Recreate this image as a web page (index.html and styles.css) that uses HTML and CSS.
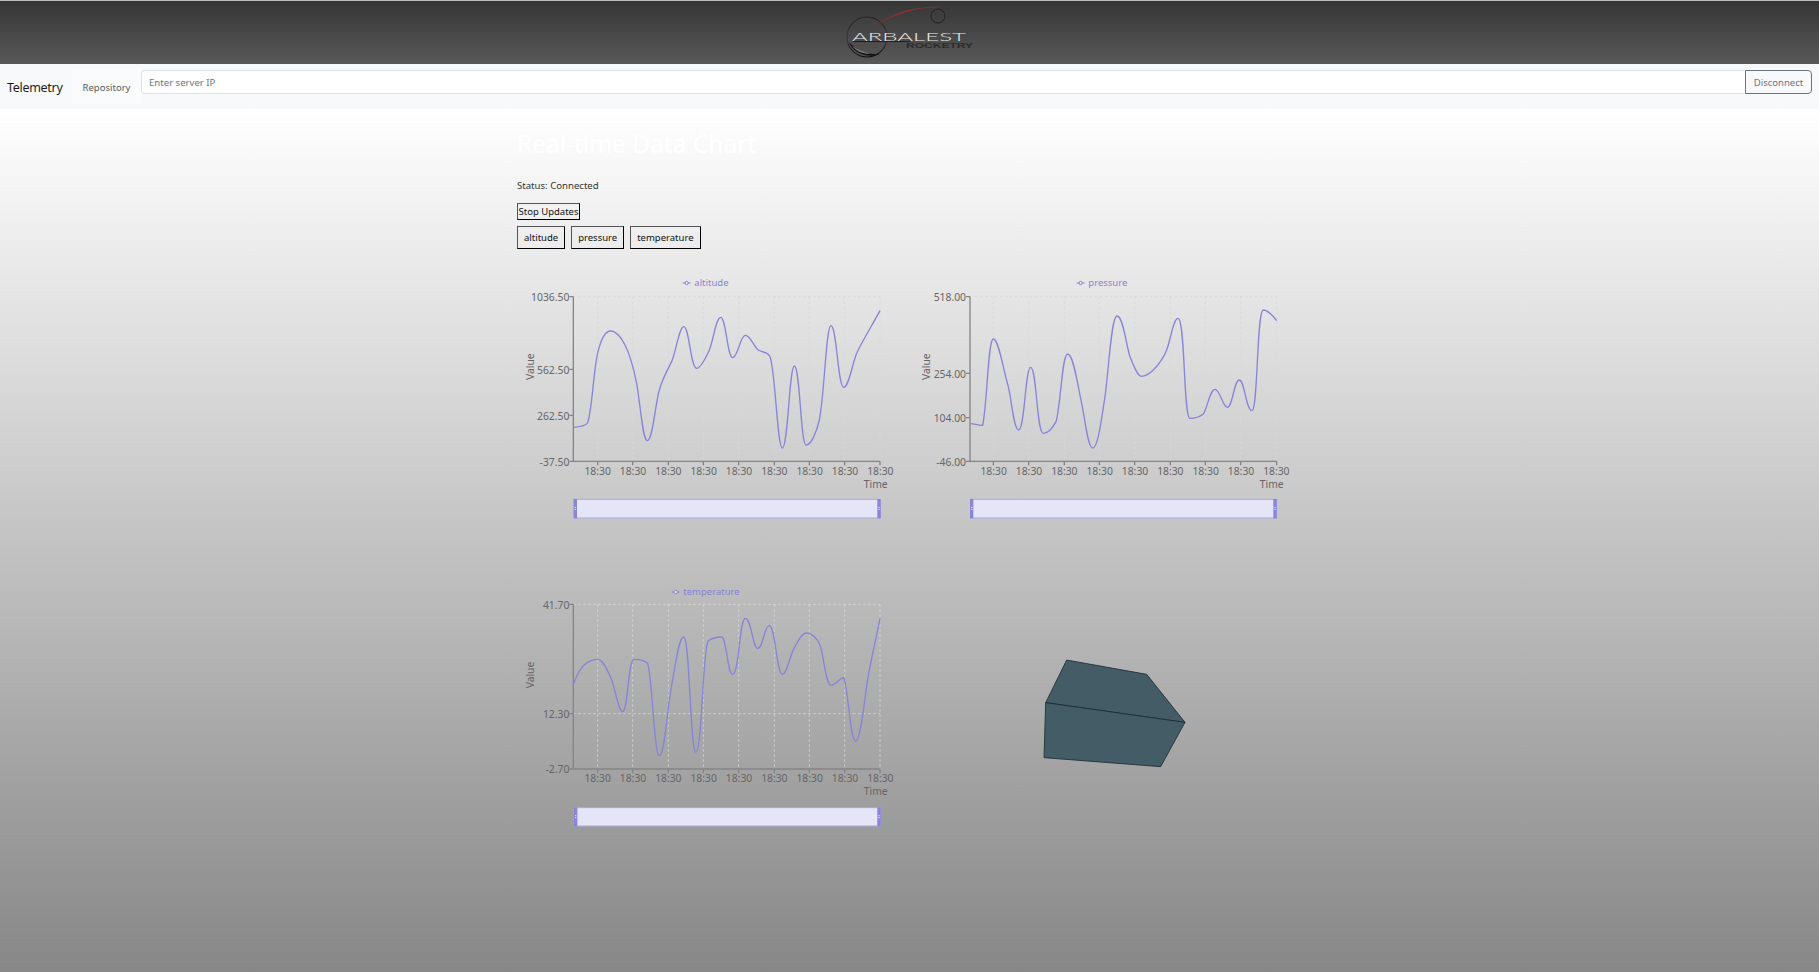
FILE: index.html
```html
<!DOCTYPE html>
<html lang="en">
<head>
<meta charset="utf-8">
<title>Telemetry</title>
<link rel="stylesheet" href="styles.css">
</head>
<body>
<header class="banner">
  <svg class="logo" width="140" height="64" viewBox="0 0 140 64">
    <defs>
      <linearGradient id="ringfade" x1="0" y1="0" x2="0" y2="1">
        <stop offset="0" stop-color="#222"/>
        <stop offset="0.55" stop-color="#3a3a3a"/>
        <stop offset="1" stop-color="#111"/>
      </linearGradient>
      <linearGradient id="redarc" x1="0" y1="1" x2="1" y2="0">
        <stop offset="0" stop-color="#6a3030"/>
        <stop offset="0.6" stop-color="#b52a2a"/>
        <stop offset="1" stop-color="#5a3a3a"/>
      </linearGradient>
    </defs>
    <circle cx="27" cy="37" r="20" fill="none" stroke="url(#ringfade)" stroke-width="1.2"/>
    <path d="M9 42 C13 53 27 59 41 54 C30 55 17 52 9 42Z" fill="#111"/>
    <path d="M12 46 C17 52 24 54 30 54 C23 52 17 49 12 46Z" fill="#ccc" opacity="0.55"/>
    <circle cx="98" cy="16" r="7" fill="none" stroke="#222" stroke-width="1"/>
    <path d="M37 25 C55 12 75 7 100 7" fill="none" stroke="url(#redarc)" stroke-width="1.2"/>
    <path d="M13 41.5 H70" stroke="#111" stroke-width="0.8"/>
    <text class="logo-main" x="12" y="41" textLength="114" lengthAdjust="spacingAndGlyphs">ARBALEST</text>
    <text class="logo-sub" x="66" y="48" textLength="67" lengthAdjust="spacingAndGlyphs">ROCKETRY</text>
  </svg>
</header>

<nav class="navbar">
  <span class="brand">Telemetry</span>
  <a class="tab">Repository</a>
  <div class="ip-group">
    <input class="ip-input" type="text" placeholder="Enter server IP">
    <button class="disconnect">Disconnect</button>
  </div>
</nav>

<main class="page">
  <div class="content">
    <h1 class="title">Real-time Data Chart</h1>
    <p class="status">Status: Connected</p>
    <button class="btn btn-stop">Stop Updates</button>
    <div class="series-buttons">
      <button class="btn btn-series">altitude</button>
      <button class="btn btn-series">pressure</button>
      <button class="btn btn-series">temperature</button>
    </div>

    <div class="charts">
      <svg class="chart" width="393" height="260" viewBox="21 0 1179 780">
        <g class="grid">
          <path d="M190 80H1110M190 298H1110M190 436H1110"/>
          <path d="M263 80V574M368 80V574M475 80V574M580 80V574M686 80V574M793 80V574M898 80V574M1004 80V574M1110 80V574"/>
        </g>
        <path class="axis" d="M190 80V574H1110M178 80H190M178 298H190M178 436H190M178 574H190M263 574V586M368 574V586M475 574V586M580 574V586M686 574V586M793 574V586M898 574V586M1004 574V586M1110 574V586"/>
        <g class="tick tick-y">
          <text x="178" y="93">1036.50</text>
          <text x="178" y="311">562.50</text>
          <text x="178" y="449">262.50</text>
          <text x="178" y="587">-37.50</text>
        </g>
        <g class="tick tick-x">
          <text x="263" y="614">18:30</text><text x="369" y="614">18:30</text><text x="475" y="614">18:30</text>
          <text x="581" y="614">18:30</text><text x="687" y="614">18:30</text><text x="793" y="614">18:30</text>
          <text x="899" y="614">18:30</text><text x="1005" y="614">18:30</text><text x="1111" y="614">18:30</text>
        </g>
        <text class="axis-label" transform="translate(72 290) rotate(-90)">Value</text>
        <text class="axis-label" x="1097" y="653">Time</text>
        <path class="line" d="M190 472C206 470 224 469 232 460C246 430 250 300 264 245C274 205 288 183 302 183C318 183 336 205 345 225C360 255 372 300 380 340C392 410 398 512 412 512C428 512 436 400 448 360C458 325 472 300 485 275C498 245 508 170 521 170C538 170 542 295 560 295C572 295 588 262 598 240C610 212 618 142 632 142C648 142 652 263 668 263C684 263 690 196 706 196C722 196 732 232 745 240C758 248 774 246 780 260C796 300 802 534 817 534C834 534 838 288 853 288C870 288 872 525 888 525C904 525 920 485 928 450C944 370 948 167 963 167C980 167 984 352 1001 352C1016 352 1026 285 1040 250C1058 210 1090 160 1110 122"/>
        <path class="legend-mark" d="M518 39H542"/><circle class="legend-dot" cx="530" cy="39" r="5"/>
        <text class="legend-text" x="553" y="49">altitude</text>
        <rect class="brush" x="192" y="688" width="918" height="56"/>
        <rect class="traveller" x="191" y="687" width="10" height="58"/><path class="grip" d="M194 712H198M194 718H198"/>
        <rect class="traveller" x="1102" y="687" width="10" height="58"/><path class="grip" d="M1105 712H1109M1105 718H1109"/>
      </svg>

      <svg class="chart" width="393" height="260" viewBox="0 0 1179 780">
        <g class="grid">
          <path d="M180 80H1100M180 310H1100M180 443H1100"/>
          <path d="M250 80V574M356 80V574M463 80V574M568 80V574M674 80V574M781 80V574M886 80V574M992 80V574M1100 80V574"/>
        </g>
        <path class="axis" d="M180 80V574H1100M168 80H180M168 310H180M168 443H180M168 574H180M250 574V586M356 574V586M463 574V586M568 574V586M674 574V586M781 574V586M886 574V586M992 574V586M1100 574V586"/>
        <g class="tick tick-y">
          <text x="168" y="93">518.00</text>
          <text x="168" y="323">254.00</text>
          <text x="168" y="456">104.00</text>
          <text x="168" y="587">-46.00</text>
        </g>
        <g class="tick tick-x">
          <text x="251" y="614">18:30</text><text x="357" y="614">18:30</text><text x="463" y="614">18:30</text>
          <text x="569" y="614">18:30</text><text x="675" y="614">18:30</text><text x="781" y="614">18:30</text>
          <text x="887" y="614">18:30</text><text x="993" y="614">18:30</text><text x="1099" y="614">18:30</text>
        </g>
        <text class="axis-label" transform="translate(60 290) rotate(-90)">Value</text>
        <text class="axis-label" x="1085" y="653">Time</text>
        <path class="line" d="M180 460C195 462 208 467 218 466C232 400 234 207 250 207C266 207 280 300 295 350C306 400 312 480 326 480C344 480 346 292 362 292C380 292 380 490 400 490C416 490 430 470 438 455C452 410 456 252 473 252C490 252 502 340 515 400C526 455 534 534 548 534C564 534 574 450 585 380C596 300 604 138 621 138C640 138 648 225 660 260C670 285 682 319 694 319C708 319 720 310 730 300C745 285 760 265 770 240C782 210 790 145 804 145C826 145 820 445 840 445C855 445 870 440 880 432C892 415 900 358 915 358C930 358 938 412 952 412C968 412 972 330 988 330C1004 330 1008 422 1026 422C1044 422 1040 120 1060 120C1072 120 1090 138 1100 152"/>
        <path class="legend-mark" d="M500 39H524"/><circle class="legend-dot" cx="512" cy="39" r="5"/>
        <text class="legend-text" x="535" y="49">pressure</text>
        <rect class="brush" x="182" y="688" width="918" height="56"/>
        <rect class="traveller" x="180" y="687" width="10" height="58"/><path class="grip" d="M183 712H187M183 718H187"/>
        <rect class="traveller" x="1090" y="687" width="10" height="58"/><path class="grip" d="M1093 712H1097M1093 718H1097"/>
      </svg>

      <svg class="chart" width="393" height="260" viewBox="21 0 1179 780">
        <g class="grid">
          <path d="M190 73H1110M190 401H1110"/>
          <path d="M263 73V567M368 73V567M475 73V567M580 73V567M686 73V567M793 73V567M898 73V567M1004 73V567M1110 73V567"/>
        </g>
        <path class="axis" d="M190 73V567H1110M178 73H190M178 401H190M178 567H190M263 567V579M368 567V579M475 567V579M580 567V579M686 567V579M793 567V579M898 567V579M1004 567V579M1110 567V579"/>
        <g class="tick tick-y">
          <text x="178" y="86">41.70</text>
          <text x="178" y="414">12.30</text>
          <text x="178" y="580">-2.70</text>
        </g>
        <g class="tick tick-x">
          <text x="263" y="607">18:30</text><text x="369" y="607">18:30</text><text x="475" y="607">18:30</text>
          <text x="581" y="607">18:30</text><text x="687" y="607">18:30</text><text x="793" y="607">18:30</text>
          <text x="899" y="607">18:30</text><text x="1005" y="607">18:30</text><text x="1111" y="607">18:30</text>
        </g>
        <text class="axis-label" transform="translate(72 285) rotate(-90)">Value</text>
        <text class="axis-label" x="1097" y="646">Time</text>
        <path class="line" d="M190 315C198 290 212 262 228 250C240 242 252 238 263 238C280 238 294 275 305 300C316 330 326 395 338 395C354 395 354 238 372 238C386 238 404 242 413 250C428 300 432 527 448 527C464 527 470 400 485 315C496 260 506 171 521 171C540 171 540 517 558 517C576 517 578 200 595 182C606 174 622 171 634 171C650 171 652 283 668 283C688 283 688 115 706 115C724 115 728 205 743 205C760 205 762 137 778 137C796 137 800 283 817 283C830 283 840 228 852 205C864 182 876 159 890 159C905 159 922 175 930 195C942 230 948 316 963 316C978 316 990 293 1001 293C1016 330 1020 483 1037 483C1052 483 1062 370 1072 305C1082 240 1100 170 1110 115"/>
        <path class="legend-mark" d="M485 36H509"/><circle class="legend-dot" cx="497" cy="36" r="5"/>
        <text class="legend-text" x="520" y="46">temperature</text>
        <rect class="brush" x="193" y="683" width="918" height="55"/>
        <rect class="traveller" x="192" y="682" width="10" height="57"/><path class="grip" d="M195 707H199M195 713H199"/>
        <rect class="traveller" x="1102" y="682" width="10" height="57"/><path class="grip" d="M1105 707H1109M1105 713H1109"/>
      </svg>

      <svg class="cube" width="393" height="260" viewBox="-330 -180 1179 780">
        <polygon class="cube-face" points="140,60 380,103 495,247 77,188"/>
        <polygon class="cube-face" points="77,188 495,247 422,380 72,353"/>
      </svg>
    </div>
  </div>
</main>
</body>
</html>
```
FILE: styles.css
```css
* { box-sizing: border-box; }
html, body { margin: 0; height: 100%; }
body {
  display: flex;
  flex-direction: column;
  font-family: "Noto Sans", sans-serif;
  background: #fff;
}

.banner {
  height: 64px;
  flex: none;
  display: flex;
  justify-content: center;
  background: linear-gradient(#363636, #585858);
  border-top: 1px solid #bbb;
}
.logo { display: block; margin-top: -1px; margin-left: 1px; }
.logo-main { font: 300 12px Lato, sans-serif; fill: #e8e8e8; }
.logo-sub { font: 700 7px "Liberation Sans", sans-serif; fill: #2c2c2c; }

.navbar {
  height: 45px;
  flex: none;
  display: flex;
  align-items: flex-start;
  padding-right: 7px;
  background: #f8f9fa;
}
.brand {
  width: 72px;
  padding-left: 7px;
  font-size: 12.5px;
  line-height: 20px;
  margin-top: 14px;
  letter-spacing: -0.3px;
  color: #1c1c1c;
}
.tab {
  width: 69px;
  height: 35px;
  margin-top: 5px;
  display: flex;
  align-items: center;
  justify-content: center;
  font-size: 9.5px;
  color: #55595e;
  background: #fbfbfc;
  padding-top: 2px;
}
.ip-group {
  flex: 1;
  display: flex;
  height: 24px;
  margin-top: 6px;
}
.ip-input {
  flex: 1;
  min-width: 0;
  height: 100%;
  padding: 0 0 0 7px;
  border: 1px solid #dee2e6;
  border-right: 0;
  border-radius: 4px 0 0 4px;
  background: #fff;
  font: 9.6px "Noto Sans", sans-serif;
  outline: none;
}
.ip-input::placeholder { color: #6c757d; opacity: 1; }
.disconnect {
  width: 67px;
  height: 100%;
  padding: 0;
  border: 1px solid #6c757d;
  border-radius: 0 4px 4px 0;
  background: transparent;
  font: 9.5px "Noto Sans", sans-serif;
  color: #6c757d;
}

.page {
  flex: 1;
  background: linear-gradient(#fff, #878787);
}
.content {
  width: 785px;
  margin: 0 auto;
  padding-top: 20px;
}
.title {
  margin: 0;
  font-size: 24.5px;
  line-height: 29px;
  font-weight: 400;
  color: #fff;
}
.status {
  margin: 21px 0 0;
  font-size: 9.6px;
  line-height: 14px;
  color: #333;
}
.btn {
  display: block;
  padding: 0;
  border-style: solid;
  border-width: 1px;
  border-color: #555 #000 #000 #555;
  background: transparent;
  font: 9.5px "Noto Sans", sans-serif;
  color: #111;
  white-space: nowrap;
}
.btn-stop { width: 63px; height: 17px; margin-top: 10px; line-height: 14px; }
.series-buttons { display: flex; gap: 6px; margin-top: 6px; }
.btn-series { height: 23px; padding: 0 6px; }

.charts {
  display: grid;
  grid-template-columns: 393px 393px;
  grid-auto-rows: 260px;
  row-gap: 50px;
  margin-top: 21px;
}
.chart, .cube { display: block; overflow: visible; }

.grid path { fill: none; stroke: #d8d8d8; stroke-width: 2.5; stroke-dasharray: 7 8; }
.axis { fill: none; stroke: #858585; stroke-width: 4; }
.tick text, .axis-label {
  font-family: "Noto Sans", sans-serif;
  font-size: 31px;
  fill: #666;
}
.tick-y text { text-anchor: end; }
.tick-x text { text-anchor: middle; }
.axis-label { text-anchor: middle; }
.line { fill: none; stroke: #8884d8; stroke-width: 4; }
.legend-mark { fill: none; stroke: #8884d8; stroke-width: 3; }
.legend-dot { fill: #e8e8e8; stroke: #8884d8; stroke-width: 3; }
.legend-text {
  font-family: "Noto Sans", sans-serif;
  font-size: 28.5px;
  fill: #8884d8;
}
.brush { fill: #e6e5f7; stroke: #a9a7e3; stroke-width: 3; }
.traveller { fill: #8884d8; }
.grip { fill: none; stroke: #e6e5f7; stroke-width: 3; }
.cube-face { fill: #435c66; stroke: #1e2c32; stroke-width: 2.5; stroke-linejoin: round; }
```
